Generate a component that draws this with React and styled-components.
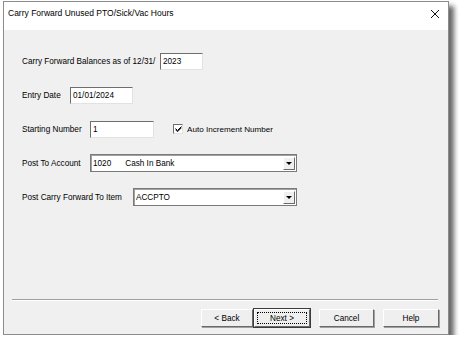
import React from "react";
import styled, { createGlobalStyle } from "styled-components";

const Global = createGlobalStyle`
  body {
    margin: 0;
    background: #ffffff;
    font-family: "Liberation Sans", Arial, sans-serif;
  }
`;

const Window = styled.div`
  box-sizing: border-box;
  margin: 1px 0 0 3px;
  width: 446px;
  height: 334px;
  border: 1px solid #8c8c8c;
  background: #f0f0f0;
  box-shadow: 5px 5px 5px rgba(0, 0, 0, 0.6);
  display: flex;
  flex-direction: column;
`;

const TitleBar = styled.div`
  height: 28px;
  background: #ffffff;
  display: flex;
  align-items: flex-start;
  justify-content: space-between;
  padding: 6px 8px 0 4px;
  box-sizing: border-box;
`;

const Title = styled.span`
  font-size: 8.5px;
  line-height: 11px;
  color: #000;
`;

const Close = styled.svg`
  margin-top: 1px;
`;

const Content = styled.div`
  flex: 1;
  display: flex;
  flex-direction: column;
`;

const Form = styled.div`
  display: flex;
  flex-direction: column;
  gap: 16px;
  padding: 22px 0 0 18px;
`;

const Row = styled.div`
  display: flex;
  align-items: center;
  height: 18px;
`;

const Label = styled.span`
  width: ${(p) => p.$w}px;
  font-size: 8.2px;
  color: #000;
  white-space: nowrap;
`;

const Field = styled.div`
  box-sizing: border-box;
  width: ${(p) => p.$w}px;
  height: 17px;
  background: #fff;
  border: 1px solid;
  border-color: #6e6e6e #e2e2e2 #e2e2e2 #6e6e6e;
  font-size: 8.2px;
  line-height: 15px;
  padding-left: 2px;
  color: #000;
`;

const Select = styled.div`
  box-sizing: border-box;
  width: ${(p) => p.$w}px;
  height: 18px;
  background: #fff;
  border: 1px solid #7a7a7a;
  box-shadow: inset 1px 1px 0 #a0a0a0;
  display: flex;
  align-items: center;
  justify-content: space-between;
  padding: 0 1px 0 2px;
  font-size: 8.2px;
  color: #000;
`;

const Gap = styled.span`
  display: inline-block;
  width: 14px;
`;

const DropButton = styled.div`
  box-sizing: border-box;
  width: 12px;
  height: 13px;
  background: #f0f0f0;
  border: 1px solid;
  border-color: #ffffff #6a6a6a #6a6a6a #ffffff;
  display: flex;
  align-items: center;
  justify-content: center;
`;

const Arrow = styled.div`
  width: 0;
  height: 0;
  border-left: 3px solid transparent;
  border-right: 3px solid transparent;
  border-top: 3px solid #000;
  margin-top: 1px;
`;

const Check = styled.div`
  box-sizing: border-box;
  width: 10px;
  height: 10px;
  margin-left: 19px;
  background: #fff;
  border: 1px solid;
  border-color: #6e6e6e #e2e2e2 #e2e2e2 #6e6e6e;
  display: flex;
  align-items: center;
  justify-content: center;
`;

const CheckText = styled.span`
  font-size: 8.1px;
  margin-left: 4px;
  color: #000;
`;

const Footer = styled.div`
  margin-top: auto;
  padding: 0 10px 7px 8px;
  display: flex;
  flex-direction: column;
`;

const Separator = styled.div`
  height: 1px;
  background: #a0a0a0;
  border-bottom: 1px solid #ffffff;
  margin-bottom: 8px;
`;

const Buttons = styled.div`
  display: flex;
  justify-content: flex-end;
  margin-right: -1px;
`;

const Button = styled.button`
  box-sizing: border-box;
  width: ${(p) => p.$w}px;
  height: 18px;
  margin-left: ${(p) => p.$ml || 0}px;
  padding: 0;
  background: #efefef;
  font-family: "Liberation Sans", Arial, sans-serif;
  font-size: 8.2px;
  color: #000;
  border: 1px solid;
  border-color: #ffffff #6a6a6a #6a6a6a #ffffff;
  box-shadow: ${(p) =>
    p.$default ? "0 0 0 1px #3c3c3c" : "1px 1px 0 #a0a0a0"};
  outline: ${(p) => (p.$default ? "1px dotted #000" : "none")};
  outline-offset: -4px;
`;

export default function App() {
  return (
    <>
      <Global />
      <Window>
        <TitleBar>
          <Title>Carry Forward Unused PTO/Sick/Vac Hours</Title>
          <Close width="10" height="10" viewBox="0 0 10 10">
            <path d="M1 1 L9 9 M9 1 L1 9" stroke="#111" strokeWidth="1" />
          </Close>
        </TitleBar>
        <Content>
          <Form>
            <Row>
              <Label $w={138}>Carry Forward Balances as of 12/31/</Label>
              <Field $w={43}>2023</Field>
            </Row>
            <Row>
              <Label $w={48}>Entry Date</Label>
              <Field $w={63}>01/01/2024</Field>
            </Row>
            <Row>
              <Label $w={68}>Starting Number</Label>
              <Field $w={64}>1</Field>
              <Check>
                <svg width="7" height="7" viewBox="0 0 7 7">
                  <path d="M0.5 2.5 L2.5 4.5 L6.5 0.5 M0.5 3.7 L2.5 5.7 L6.5 1.7" stroke="#000" strokeWidth="1" fill="none" />
                </svg>
              </Check>
              <CheckText>Auto Increment Number</CheckText>
            </Row>
            <Row>
              <Label $w={68}>Post To Account</Label>
              <Select $w={207}>
                <span>
                  1020<Gap />Cash In Bank
                </span>
                <DropButton>
                  <Arrow />
                </DropButton>
              </Select>
            </Row>
            <Row>
              <Label $w={111}>Post Carry Forward To Item</Label>
              <Select $w={164}>
                <span>ACCPTO</span>
                <DropButton>
                  <Arrow />
                </DropButton>
              </Select>
            </Row>
          </Form>
          <Footer>
            <Separator />
            <Buttons>
              <Button $w={52}>&lt; Back</Button>
              <Button $w={56} $ml={1} $default>
                Next &gt;
              </Button>
              <Button $w={55} $ml={9}>Cancel</Button>
              <Button $w={56} $ml={9}>Help</Button>
            </Buttons>
          </Footer>
        </Content>
      </Window>
    </>
  );
}
